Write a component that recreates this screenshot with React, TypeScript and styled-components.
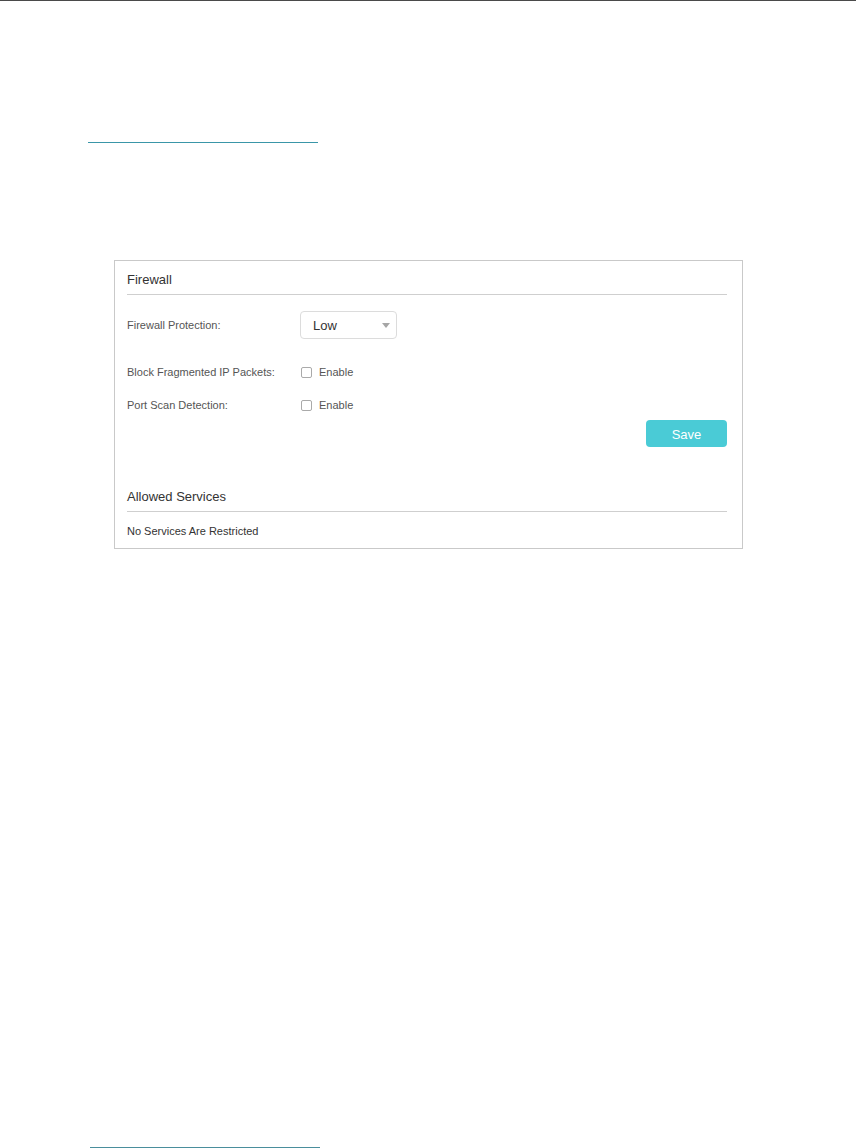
import React from "react";
import styled, { createGlobalStyle } from "styled-components";

const Global = createGlobalStyle`
  html, body { margin: 0; padding: 0; background: #fff; }
  body { font-family: "Liberation Sans", Arial, sans-serif; }
`;

const Page = styled.div`
  width: 856px;
  height: 1148px;
  display: flex;
  flex-direction: column;
  overflow: hidden;
`;

const TopRule = styled.div`
  height: 1px;
  background: #4a4a4a;
  flex-shrink: 0;
`;

const LinkRule = styled.div<{ $top?: number; $left: number; $color: string }>`
  flex-shrink: 0;
  margin-top: ${(p) => (p.$top === undefined ? "auto" : `${p.$top}px`)};
  margin-left: ${(p) => p.$left}px;
  width: 230px;
  height: 1px;
  background: ${(p) => p.$color};
`;

const Panel = styled.section`
  margin-top: 117px;
  margin-left: 114px;
  width: 629px;
  box-sizing: border-box;
  border: 1px solid #c9c9c9;
  padding: 0 15px 10px 12px;
  display: flex;
  flex-direction: column;
  flex-shrink: 0;
`;

const SectionTitle = styled.h2<{ $top: number }>`
  margin: ${(p) => p.$top}px 0 0;
  padding: 0 0 5px;
  font-size: 13px;
  line-height: 18px;
  font-weight: normal;
  color: #333;
  border-bottom: 1px solid #cfcfcf;
`;

const Row = styled.div<{ $top: number; $h: number }>`
  display: flex;
  align-items: center;
  margin-top: ${(p) => p.$top}px;
  height: ${(p) => p.$h}px;
`;

const Label = styled.span`
  width: 173px;
  font-size: 11px;
  color: #555;
`;

const Select = styled.div`
  position: relative;
  width: 97px;
  height: 28px;
  box-sizing: border-box;
  border: 1px solid #dcdcdc;
  border-radius: 4px;
  display: flex;
  align-items: center;
  padding-left: 12px;
  font-size: 13px;
  color: #333;
`;

const Arrow = styled.span`
  position: absolute;
  right: 6px;
  top: 11px;
  width: 0;
  height: 0;
  border-left: 4.5px solid transparent;
  border-right: 4.5px solid transparent;
  border-top: 5px solid #a6a6a6;
`;

const CheckBox = styled.span`
  width: 11px;
  height: 11px;
  box-sizing: border-box;
  border: 1px solid #aaa;
  border-radius: 2px;
  margin-left: 1px;
`;

const CheckText = styled.span`
  margin-left: 7px;
  font-size: 11px;
  color: #555;
`;

const ButtonRow = styled.div`
  display: flex;
  justify-content: flex-end;
  margin-top: 5px;
`;

const SaveButton = styled.button`
  width: 81px;
  height: 27px;
  border: none;
  border-radius: 4px;
  background: #4acbd6;
  color: #fff;
  font-family: "Liberation Sans", Arial, sans-serif;
  font-size: 13px;
  padding: 1px 0 0;
`;

const Note = styled.p`
  margin: 12px 0 0;
  font-size: 11px;
  line-height: 14px;
  color: #333;
`;

export default function App() {
  return (
    <>
      <Global />
      <Page>
        <TopRule />
        <LinkRule $top={141} $left={88} $color="#3a96a8" />
        <Panel>
          <SectionTitle $top={10}>Firewall</SectionTitle>
          <Row $top={16} $h={28}>
            <Label>Firewall Protection:</Label>
            <Select>
              Low
              <Arrow />
            </Select>
          </Row>
          <Row $top={23} $h={20}>
            <Label>Block Fragmented IP Packets:</Label>
            <CheckBox />
            <CheckText>Enable</CheckText>
          </Row>
          <Row $top={13} $h={20}>
            <Label>Port Scan Detection:</Label>
            <CheckBox />
            <CheckText>Enable</CheckText>
          </Row>
          <ButtonRow>
            <SaveButton>Save</SaveButton>
          </ButtonRow>
          <SectionTitle $top={41}>Allowed Services</SectionTitle>
          <Note>No Services Are Restricted</Note>
        </Panel>
        <LinkRule $left={90} $color="#4a8e9c" />
      </Page>
    </>
  );
}
